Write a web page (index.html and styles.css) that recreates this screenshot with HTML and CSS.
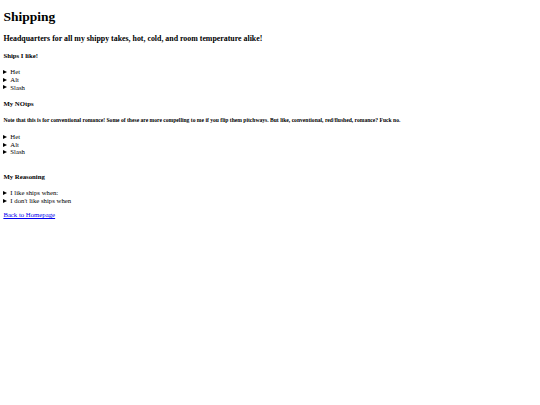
FILE: index.html
```html
<!DOCTYPE html>
<html lang="en">
<head>
<meta charset="utf-8">
<title>Shipping</title>
<link rel="stylesheet" href="styles.css">
</head>
<body class="frame">
<main class="page">
<h1>Shipping</h1>
<h3>Headquarters for all my shippy takes, hot, cold, and room temperature alike!</h3>
<h4>Ships I like!</h4>
<details><summary>Het</summary></details>
<details><summary>Alt</summary></details>
<details><summary>Slash</summary></details>
<h4>My NOtps</h4>
<h5>Note that this is for conventional romance! Some of these are more compelling to me if you flip them pitchways. But like, conventional, red/flushed, romance? Fuck no.</h5>
<details><summary>Het</summary></details>
<details><summary>Alt</summary></details>
<details><summary>Slash</summary></details>
<br>
<h4>My Reasoning</h4>
<details><summary>I like ships when:</summary></details>
<details><summary>I don't like ships when</summary></details>
<p><a href="#">Back to Homepage</a></p>
</main>
</body>
</html>
```
FILE: styles.css
```css
html {
  background: #ffffff;
}
.frame {
  margin: 0;
}
.page {
  zoom: 0.421875;
  padding: 8px;
  display: flow-root;
  font-family: "Liberation Serif", "Times New Roman", serif;
  font-size: 16px;
  line-height: 18px;
  color: #000000;
}
.page h1 {
  line-height: 37px;
}
.page h1:first-child {
  margin-top: 13.44px;
}
.page h3 {
  line-height: 22px;
}
.page h5 {
  line-height: 16px;
}
.page summary {
  display: block;
  list-style: none;
}
.page summary::-webkit-details-marker {
  display: none;
}
.page summary::before {
  content: "";
  display: inline-block;
  width: 0;
  height: 0;
  border-left: 10px solid #000000;
  border-top: 5.5px solid transparent;
  border-bottom: 5.5px solid transparent;
  margin-right: 7px;
  vertical-align: 0.5px;
}
.page a {
  color: #0000ee;
}
```
